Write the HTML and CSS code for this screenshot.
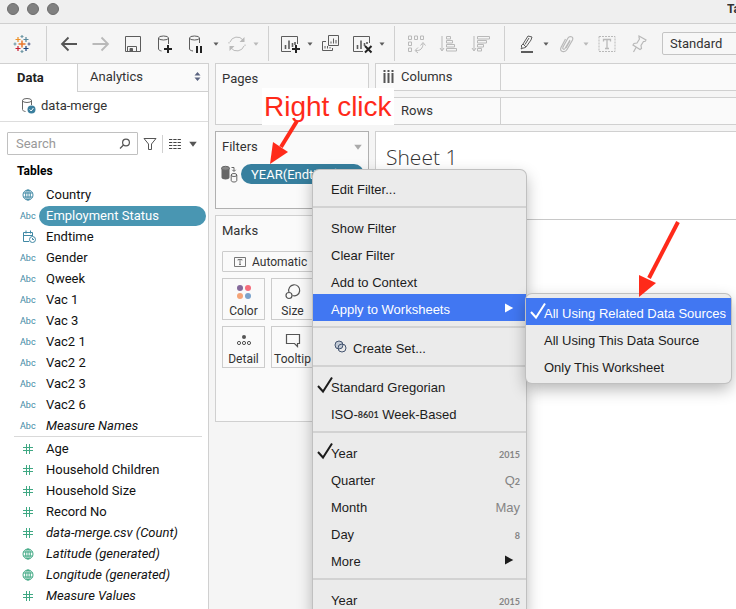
FILE: index.html
```html
<!DOCTYPE html>
<html lang="en">
<head>
<meta charset="utf-8">
<meta name="viewport" content="width=device-width, initial-scale=1">
<title>Tableau</title>
<link rel="stylesheet" href="styles.css">
</head>
<body>
<svg class="defs" aria-hidden="true">
  <symbol id="globe" viewBox="0 0 12 12"><g fill="none" stroke="currentColor"><circle cx="6" cy="6" r="5"/><ellipse cx="6" cy="6" rx="2.3" ry="5"/><path d="M1.5 4h9M1.5 8h9M6 1v10"/></g></symbol>
  <symbol id="hash" viewBox="0 0 12 12"><path d="M4.5 1v10M7.5 1v10M1 4.5h10M1 7.5h10" fill="none" stroke="currentColor"/></symbol>
  <symbol id="caret" viewBox="0 0 8 8"><path d="M1.5 2.5h5L4 5.8z" fill="currentColor"/></symbol>
  <symbol id="check" viewBox="0 0 16 18"><path d="M1 10l5 5.500L15 1.500" fill="none" stroke="currentColor" stroke-width="2"/></symbol>
  <symbol id="play" viewBox="0 0 10 10"><path d="M1 .5v9L9.300 5z" fill="currentColor"/></symbol>
</svg>

<header class="titlebar">
  <span class="light"></span><span class="light"></span><span class="light"></span>
  <span class="window-title">Tableau</span>
</header>

<nav class="toolbar" aria-label="Toolbar">
  <button class="logo" aria-label="Start page"><svg width="20" height="20" viewBox="0 0 20 20" fill="none" stroke-width="1.200">
    <path d="M10 6.500v7M6.500 10h7" stroke="#e8762c" stroke-width="1.500"/>
    <path d="M6 3v5M3.500 5.500h5" stroke="#eb9129"/><path d="M14 3v5M11.500 5.500h5" stroke="#59879b"/>
    <path d="M6 12v5M3.500 14.500h5" stroke="#c72035"/><path d="M14 12v5M11.500 14.500h5" stroke="#1f447e"/>
    <path d="M10 1v3M8.500 2.500h3M10 16v3M8.500 17.500h3M3 8.500v3M1.500 10h3" stroke="#7199a6"/><path d="M17 8.500v3M15.500 10h3" stroke="#5b6591"/></svg></button>
  <div class="group">
    <button aria-label="Back"><svg width="20" height="20" viewBox="0 0 20 20"><path d="M18 10H3M9.500 3.500L3 10l6.500 6.500" fill="none" stroke="#555" stroke-width="1.800"/></svg></button>
    <button class="off" aria-label="Forward"><svg width="20" height="20" viewBox="0 0 20 20"><path d="M1.500 10h15M10.500 3.500L17 10l-6.500 6.500" fill="none" stroke="currentColor" stroke-width="1.800"/></svg></button>
    <button aria-label="Save"><svg width="20" height="20" viewBox="0 0 20 20" fill="none" stroke="currentColor"><path d="M2.500 2.500h15v15h-15zM4.500 17.500v-5h9v5"/><path d="M7 14.500h2.500v2.500H7z" fill="currentColor"/></svg></button>
    <button aria-label="New data source"><svg width="20" height="20" viewBox="0 0 20 20" fill="none" stroke="currentColor"><ellipse cx="8.500" cy="4" rx="5" ry="2"/><path d="M3.500 4v11c0 1 1.500 1.700 3 2M13.500 4v6"/><path d="M13 11v8M9 15h8" stroke="#222" stroke-width="2"/></svg></button>
    <span class="split">
      <button aria-label="Pause updates"><svg width="20" height="20" viewBox="0 0 20 20" fill="none" stroke="currentColor"><ellipse cx="7.500" cy="4" rx="5" ry="2"/><path d="M2.500 4v11c0 1 1.500 1.700 3.500 2M12.500 4v5"/><path d="M10 12v7M14 12v7" stroke="#222" stroke-width="2"/></svg></button>
      <button aria-label="Pause options"><svg width="8" height="8"><use href="#caret"/></svg></button>
    </span>
    <span class="split">
      <button class="off" aria-label="Run update"><svg width="20" height="20" viewBox="0 0 20 20" fill="none" stroke="currentColor"><path d="M3 8a7.500 7.500 0 0 1 13-2M17 12a7.500 7.500 0 0 1-13 2"/><path d="M17.500 3v5h-5zM2.500 17v-5h5z" fill="currentColor" stroke="none"/><path d="M2 9.500V8M18 10.500V12"/></svg></button>
      <button class="off" aria-label="Update options"><svg width="8" height="8"><use href="#caret"/></svg></button>
    </span>
  </div>
  <div class="group">
    <span class="split">
      <button aria-label="New worksheet"><svg width="20" height="20" viewBox="0 0 20 20" fill="none" stroke="currentColor"><path d="M16.500 10V2.500H.500v15H10"/><path d="M4.500 15v-4M8 15V6.500M11.500 13V9M14 11V8" stroke-width="1.600"/><path d="M15 11v8M11 15h8" stroke="#222" stroke-width="2"/></svg></button>
      <button aria-label="New worksheet options"><svg width="8" height="8"><use href="#caret"/></svg></button>
    </span>
    <button aria-label="Duplicate"><svg width="20" height="20" viewBox="0 0 20 20" fill="none" stroke="currentColor"><path d="M7.500 1.500h10v10h-10zM5 7.500H1.500v9h10V14"/><path d="M10 9.500v-2M12.500 9.500v-5M15 9.500V6M4 14.500V12M6.500 14.500V12M9 14.500V13"/></svg></button>
    <span class="split">
      <button aria-label="Clear sheet"><svg width="20" height="20" viewBox="0 0 20 20" fill="none" stroke="currentColor"><path d="M16.500 9V2.500H.500v15H10"/><path d="M4.500 15v-4M8 15V6.500M11.500 12V9M14 10V8" stroke-width="1.600"/><path d="M12 12l6.500 6.500M18.500 12L12 18.500" stroke="#222" stroke-width="2"/></svg></button>
      <button aria-label="Clear options"><svg width="8" height="8"><use href="#caret"/></svg></button>
    </span>
  </div>
  <div class="group">
    <button class="off" aria-label="Swap rows and columns"><svg width="20" height="20" viewBox="0 0 20 20" fill="none" stroke="currentColor"><path d="M1.500 2h3v3.500h-3zM7.500 2h3v3.500h-3zM13.500 2h3v3.500h-3zM1.500 8h3v3.500h-3zM1.500 14h3v3.500h-3z"/><path d="M9 16.500c4 .5 7-2 7-7M11 13.500l-3 3 3 2.500M13.500 11.500l2.500-3 2.500 3"/></svg></button>
    <button class="off" aria-label="Sort ascending"><svg width="20" height="20" viewBox="0 0 20 20" fill="none" stroke="currentColor"><path d="M3 2v14M1 14l2 3 2-3M7.500 2.500h4v2.500h-4zM7.500 6.500h6V9h-6zM7.500 10.500h8V13h-8zM7.500 14.500h10V17h-10z"/></svg></button>
    <button class="off" aria-label="Sort descending"><svg width="20" height="20" viewBox="0 0 20 20" fill="none" stroke="currentColor"><path d="M3 2v14M1 14l2 3 2-3M6.500 2.500h12V5h-12zM6.500 6.500h9V9h-9zM6.500 10.500h6V13h-6zM6.500 14.500h4V17h-4z"/></svg></button>
  </div>
  <div class="group">
    <span class="split">
      <button aria-label="Highlight"><svg width="20" height="20" viewBox="0 0 20 20" fill="none" stroke="currentColor"><path d="M6 10l5-8 4 1-1 3-5 7zM6 10l-2 2 1 1-1 2 2-1h1l2-1M12 4l-4 6.500"/><path d="M4 18h12" stroke-width="2"/></svg></button>
      <button aria-label="Highlight options"><svg width="8" height="8"><use href="#caret"/></svg></button>
    </span>
    <span class="split">
      <button class="off" aria-label="Group members"><svg width="20" height="20" viewBox="0 0 20 20" fill="none" stroke="currentColor" stroke-width="1.200"><path d="M13 6l-5 8.500c-1 1.500-3 .5-2-1.500l5-9c1.500-2.500 6-1.500 4.500 2L10 15.500c-2 3.500-8 2.500-6-2L8.500 5M9 14l4-7"/></svg></button>
      <button class="off" aria-label="Group options"><svg width="8" height="8"><use href="#caret"/></svg></button>
    </span>
    <button class="off" aria-label="Show mark labels"><svg width="20" height="20" viewBox="0 0 20 20" fill="none" stroke="currentColor"><path d="M2 2.500h16v15H2z" stroke-dasharray="2 1"/><path d="M6.500 7.500v-2h7v2M10 5.500v9M8 14.500h4" stroke-width="1.300"/></svg></button>
    <button class="off" aria-label="Fix axes"><svg width="20" height="20" viewBox="0 0 20 20" fill="none" stroke="currentColor" stroke-width="1.200"><path d="M10 2l7 4-1 1.500h-1.500L12 11.500l.5 3-1.500 1-7-4.500 1-1.500 3-.5 2.500-4L10 3.500zM7 13.500L4.500 18"/></svg></button>
  </div>
  <select class="fit" aria-label="Fit"><option>Standard</option></select>
</nav>

<main class="workspace">
  <aside class="data-pane">
    <div class="tabs">
      <button class="tab active">Data</button>
      <button class="tab">Analytics<svg width="7" height="9" viewBox="0 0 7 9"><path d="M3.500 0l3 3.500h-6zM3.500 9l3-3.500h-6z" fill="#5b6480"/></svg></button>
    </div>
    <div class="source">
      <svg width="16" height="18" viewBox="0 0 16 18" fill="none" stroke="#666"><ellipse cx="6" cy="3.500" rx="4.500" ry="2"/><path d="M1.500 3.500v9c0 1 1 1.700 3 2M10.500 3.500V8"/><circle cx="10.500" cy="12.500" r="4" fill="#3b7f9e" stroke="none"/><path d="M8.700 12.500l1.500 1.500 2.200-3" stroke="#fff"/></svg>
      <span>data-merge</span>
    </div>
    <div class="search-row">
      <label class="search">
        <input type="text" placeholder="Search" aria-label="Search">
        <svg width="12" height="12" viewBox="0 0 12 12" fill="none" stroke="#555" stroke-width="1.200"><circle cx="7" cy="4.500" r="3.400"/><path d="M4.500 7L1 10.500"/></svg>
      </label>
      <button aria-label="Filter fields"><svg width="14" height="14" viewBox="0 0 14 14"><path d="M1 1.500h12L8.500 7v5.500h-3V7z" fill="none" stroke="#555"/></svg></button>
      <span class="bar"></span>
      <button aria-label="View options"><svg width="14" height="10" viewBox="0 0 14 10"><path d="M1 .5h12M1 3.500h12M1 6.500h12M1 9.500h12" stroke="#444" stroke-dasharray="3.300 1"/></svg></button>
      <button class="view-more" aria-label="More options"><svg width="12" height="12" viewBox="0 0 8 8"><use href="#caret"/></svg></button>
    </div>
    <h2>Tables</h2>
    <ul class="fields">
      <li><svg class="ico" width="12" height="12"><use href="#globe"/></svg><span>Country</span></li>
      <li class="selected"><i>Abc</i><span>Employment Status</span></li>
      <li><svg class="ico" width="15" height="14" viewBox="0 0 15 14" fill="none" stroke="currentColor"><path d="M7 11.500H1.500v-9h9V6M1.500 5.500h9M4 .5v3M8.500 .5v3"/><circle cx="10.500" cy="9.500" r="3"/><path d="M10.500 8v1.500H12"/></svg><span>Endtime</span></li>
      <li><i>Abc</i><span>Gender</span></li>
      <li><i>Abc</i><span>Qweek</span></li>
      <li><i>Abc</i><span>Vac 1</span></li>
      <li><i>Abc</i><span>Vac 3</span></li>
      <li><i>Abc</i><span>Vac2 1</span></li>
      <li><i>Abc</i><span>Vac2 2</span></li>
      <li><i>Abc</i><span>Vac2 3</span></li>
      <li><i>Abc</i><span>Vac2 6</span></li>
      <li class="generated"><i>Abc</i><span>Measure Names</span></li>
    </ul>
    <ul class="fields measures">
      <li><svg class="ico" width="12" height="12"><use href="#hash"/></svg><span>Age</span></li>
      <li><svg class="ico" width="12" height="12"><use href="#hash"/></svg><span>Household Children</span></li>
      <li><svg class="ico" width="12" height="12"><use href="#hash"/></svg><span>Household Size</span></li>
      <li><svg class="ico" width="12" height="12"><use href="#hash"/></svg><span>Record No</span></li>
      <li class="generated"><svg class="ico" width="12" height="12"><use href="#hash"/></svg><span>data-merge.csv (Count)</span></li>
      <li class="generated"><svg class="ico" width="12" height="12"><use href="#globe"/></svg><span>Latitude (generated)</span></li>
      <li class="generated"><svg class="ico" width="12" height="12"><use href="#globe"/></svg><span>Longitude (generated)</span></li>
      <li class="generated"><svg class="ico" width="12" height="12"><use href="#hash"/></svg><span>Measure Values</span></li>
    </ul>
  </aside>

  <section class="cards">
    <div class="card pages"><h3>Pages</h3></div>
    <div class="card filters">
      <h3>Filters<svg width="12" height="12" viewBox="0 0 8 8"><use href="#caret"/></svg></h3>
      <div class="filter-row">
        <svg width="17" height="18" viewBox="0 0 17 18"><path d="M.5 3.500v9c0 2.500 8 2.500 8 0v-9z" fill="#666"/><ellipse cx="4.500" cy="3.300" rx="4" ry="2" fill="#888" stroke="#666"/><path d="M10 9h7v9h-7z" fill="#fafafa"/><g fill="none" stroke="#666"><ellipse cx="13" cy="10" rx="2.800" ry="1.500"/><path d="M10.200 10v5.500c0 2 5.600 2 5.600 0V10M10.500 2.500h2.500V6M11.300 4.800L13 6.500l1.700-1.700"/></g></svg>
        <button class="pill">YEAR(Endtime)</button>
      </div>
    </div>
    <div class="card marks">
      <h3>Marks</h3>
      <div class="mark-type">
        <svg width="12" height="12" viewBox="0 0 12 12" fill="none" stroke="#777"><path d="M.5 1.500h11v9H.500zM4 4.500v-1h4v1M6 3.500v5M5 8.500h2"/></svg>
        <select aria-label="Mark type"><option>Automatic</option></select>
      </div>
      <div class="mark-grid">
        <button><svg width="18" height="18" viewBox="0 0 18 18"><circle cx="5" cy="5" r="3" fill="#84699a"/><circle cx="13" cy="5" r="3" fill="#f56d7c"/><circle cx="5" cy="13" r="3" fill="#f5a477"/><circle cx="13" cy="13" r="3" fill="#7ba3cb"/></svg>Color</button>
        <button><svg width="18" height="18" viewBox="0 0 18 18" fill="none" stroke="#555" stroke-width="1.200"><path d="M5 9A5.500 5.500 0 1 1 8.500 12.500"/><circle cx="5" cy="12.500" r="3"/></svg>Size</button>
        <button><svg width="18" height="18" viewBox="0 0 18 18" fill="none" stroke="#555"><circle cx="9" cy="6" r="2" fill="#555" stroke="none"/><circle cx="4" cy="12" r="1.600"/><circle cx="9" cy="12" r="1.600"/><circle cx="14" cy="12" r="1.600"/></svg>Detail</button>
        <button><svg width="18" height="18" viewBox="0 0 18 18" fill="none" stroke="#555" stroke-width="1.200"><path d="M2.500 3.500h13v9h-2v3l-3-3h-8z"/></svg>Tooltip</button>
      </div>
    </div>
  </section>

  <section class="canvas">
    <div class="shelf"><div class="shelf-name"><svg width="11" height="13" viewBox="0 0 11 13"><path d="M1.500 0v2M5.500 0v2M9.500 0v2M1.500 3v10M5.500 3v10M9.500 3v10" stroke="#555" stroke-width="2"/></svg>Columns</div></div>
    <div class="shelf"><div class="shelf-name"><svg width="11" height="13" viewBox="0 0 11 13"><path d="M0 2.500h2M0 6.500h2M0 10.500h2M3 2.500h8M3 6.500h8M3 10.500h8" stroke="#555" stroke-width="2"/></svg>Rows</div></div>
    <div class="sheet"><h1>Sheet 1</h1></div>
  </section>
</main>

<div class="menu context">
  <button>Edit Filter...</button>
  <hr>
  <button>Show Filter</button>
  <button>Clear Filter</button>
  <button>Add to Context</button>
  <button class="hot">Apply to Worksheets<svg class="more" width="10" height="10"><use href="#play"/></svg></button>
  <hr>
  <button class="with-icon"><svg width="13" height="13" viewBox="0 0 13 13" fill="none" stroke="#44546f"><circle cx="5" cy="5" r="4" fill="#c3cbd6"/><circle cx="8" cy="8" r="4"/></svg>Create Set...</button>
  <hr>
  <button><svg class="tick" width="16" height="18"><use href="#check"/></svg>Standard Gregorian</button>
  <button>ISO-<small class="dark">8601</small> Week-Based</button>
  <hr>
  <button><svg class="tick" width="16" height="18"><use href="#check"/></svg>Year<span class="hint"><small>2015</small></span></button>
  <button>Quarter<span class="hint">Q<small>2</small></span></button>
  <button>Month<span class="hint">May</span></button>
  <button>Day<span class="hint"><small>8</small></span></button>
  <button>More<svg class="more" width="10" height="10"><use href="#play"/></svg></button>
  <hr>
  <button>Year<span class="hint"><small>2015</small></span></button>
</div>

<div class="menu submenu">
  <button class="hot"><svg class="tick" width="16" height="18"><use href="#check"/></svg>All Using Related Data Sources</button>
  <button>All Using This Data Source</button>
  <button>Only This Worksheet</button>
</div>

<div class="note">Right click</div>
<svg class="arrow first" width="30" height="46" viewBox="0 0 30 46"><path d="M28 2L12 28" stroke="#ff2a1a" stroke-width="4"/><path d="M1 45L4 23l15 10z" fill="#ff2a1a"/></svg>
<svg class="arrow second" width="44" height="78" viewBox="0 0 44 78"><path d="M40 2L11 58" stroke="#ff2a1a" stroke-width="4"/><path d="M1 77V55l17 8z" fill="#ff2a1a"/></svg>
</body>
</html>
```
FILE: styles.css
```css
* { box-sizing: border-box; }
body {
  margin: 0;
  height: 100vh;
  overflow: hidden;
  display: flex;
  flex-direction: column;
  position: relative;
  background: #f5f5f5;
  color: #333;
  font-family: Roboto, "Liberation Sans", sans-serif;
  font-size: 12px;
}
button, select, input { font: inherit; color: inherit; }
button { padding: 0; border: 0; background: none; }
svg { display: block; flex: none; }
ul { list-style: none; margin: 0; padding: 0; }
h1, h2, h3 { margin: 0; }
.defs { position: absolute; width: 0; height: 0; }

.titlebar {
  flex: none;
  height: 24px;
  display: flex;
  gap: 8px;
  padding: 3px 0 0 7px;
  background: #efefef;
  border-bottom: 1px solid #cfcfcf;
  overflow: hidden;
}
.light { width: 12px; height: 12px; border-radius: 50%; background: #808080; border: 1px solid #6c6c6c; }
.window-title {
  margin: -2px 0 0 auto;
  width: 9px;
  overflow: hidden;
  white-space: nowrap;
  font-weight: 700;
  line-height: 16px;
}

.toolbar {
  flex: none;
  height: 39px;
  display: flex;
  align-items: center;
  overflow: hidden;
  color: #5c5c5c;
}
.logo { padding: 0 14px 0 12px; }
.group {
  flex: none;
  display: flex;
  align-items: center;
  gap: 12px;
  height: 35px;
  padding: 0 13px 0 12px;
  border-left: 1px solid #d0d0d0;
}
.split { display: flex; align-items: center; gap: 5px; margin-right: -5px; }
.off { color: #b9b9b9; }
.fit {
  flex: 1 0 120px;
  height: 23px;
  padding: 0 7px;
  border: 1px solid #c4c4c4;
  border-radius: 2px;
  background: #f7f7f7;
  color: #333;
  appearance: none;
  font-size: 13px;
}

.workspace { flex: 1; min-height: 0; display: flex; gap: 6px; }

.data-pane {
  flex: none;
  width: 209px;
  background: #fff;
  border: solid #d0d0d0;
  border-width: 1px 1px 0 0;
  overflow: hidden;
}
.tabs { display: flex; height: 28px; }
.tab {
  flex: 1;
  display: flex;
  justify-content: space-between;
  align-items: center;
  padding: 0 7px 2px 12px;
  background: #fafafa;
  border: solid #d0d0d0;
  border-width: 0 0 1px 1px;
  font-size: 13px;
}
.tab.active {
  flex: 0 0 77px;
  padding: 0 0 2px 17px;
  background: #fff;
  border: 0;
  font-weight: 700;
  font-size: 13px;
  color: #222;
}
.source {
  display: flex;
  align-items: center;
  gap: 4px;
  height: 30px;
  padding: 0 0 2px 21px;
  border-bottom: 1px solid #ddd;
  font-size: 13px;
}
.search-row { display: flex; align-items: center; gap: 5px; padding: 10px 8px 0 7px; }
.search {
  width: 131px;
  height: 23px;
  display: flex;
  align-items: center;
  padding: 0 6px 0 8px;
  border: 1px solid #c0c0c0;
  border-radius: 1px;
}
.search input { flex: 1; min-width: 0; padding: 0; border: 0; outline: 0; font-size: 13px; }
.search input::placeholder { color: #999; }
.bar { width: 1px; height: 18px; background: #d0d0d0; }
.view-more { color: #555; }
.data-pane h2 { padding-left: 17px; margin: 6px 0 3px; font-size: 12px; line-height: 20px; color: #000; }

.fields li {
  display: grid;
  grid-template-columns: 19px 1fr;
  align-items: center;
  height: 21px;
  padding: 0 2px 0 20px;
  color: #4189a5;
}
.fields span {
  height: 20px;
  padding-left: 7px;
  border-radius: 10px;
  font-size: 13px;
  line-height: 20px;
  color: #111;
}
.fields i { font-style: normal; font-size: 9px; line-height: 20px; }
.ico { margin-left: 2px; }
.selected span { background: #4996b2; color: #fff; }
.generated span { font-style: italic; }
.measures { border-top: 1px solid #d9d9d9; margin: 0 6px 0 14px; padding-top: 1px; }
.measures li { padding: 0 0 0 6px; color: #3fa883; }

.cards { flex: none; width: 154px; display: flex; flex-direction: column; gap: 6px; }
.card { background: #fafafa; border: 1px solid #d0d0d0; padding: 6px; }
.card h3 {
  display: flex;
  justify-content: space-between;
  align-items: center;
  font-size: 13px;
  font-weight: 400;
  line-height: 18px;
}
.card h3 svg { color: #aaa; margin-right: -2px; }
.pages { height: 62px; }
.filters { height: 78px; border-color: #b0b0b0; }
.filter-row { display: flex; align-items: center; gap: 3px; margin-top: 8px; }
.filter-row svg { margin-left: -1px; }
.pill {
  flex: 1;
  height: 20px;
  margin-right: -2px;
  padding-left: 10px;
  border-radius: 10px;
  background: #377f9e;
  color: #fff;
  text-align: left;
  font-size: 13px;
}
.marks { height: 207px; }
.mark-type { position: relative; margin: 11px 0 6px; }
.mark-type svg { position: absolute; left: 12px; top: 5px; }
.mark-type select {
  display: block;
  width: 100%;
  height: 21px;
  padding: 0 0 0 29px;
  border: 1px solid #ccc;
  border-radius: 1px;
  background: #fafafa;
  appearance: none;
}
.mark-grid { display: grid; grid-template-columns: repeat(2, 43px); gap: 6px; }
.mark-grid button {
  display: flex;
  flex-direction: column;
  align-items: center;
  gap: 3px;
  height: 42px;
  padding-top: 4px;
  border: 1px solid #ccc;
  line-height: 14px;
}

.canvas { flex: 1; min-width: 0; display: flex; flex-direction: column; gap: 6px; }
.shelf { height: 28px; background: #fafafa; border: 1px solid #d0d0d0; border-right: 0; }
.shelf-name {
  display: flex;
  align-items: center;
  gap: 7px;
  width: 125px;
  height: 100%;
  padding: 0 0 2px 7px;
  border-right: 1px solid #d0d0d0;
  font-size: 13px;
}
.sheet { flex: 1; background: #fff; border: solid #d0d0d0; border-width: 1px 0 0 1px; }
.sheet h1 {
  height: 88px;
  padding: 11px 10px 0;
  border-bottom: 1px solid #c8c8c8;
  font: 300 21px/28px "Open Sans", "Noto Sans", sans-serif;
}

.menu {
  position: absolute;
  padding: 4px 0;
  background: #ebebeb;
  border-radius: 6px;
  box-shadow: 0 0 0 1px #c0c0c0, 0 6px 16px rgba(0, 0, 0, .3);
  font-family: "Liberation Sans", Arial, sans-serif;
  font-size: 13px;
  color: #1c1c1c;
}
.context { left: 313px; top: 170px; width: 213px; }
.submenu { left: 526px; top: 294px; width: 205px; }
.menu button {
  position: relative;
  display: flex;
  align-items: center;
  width: 100%;
  height: 27px;
  padding: 3px 6px 0 18px;
  white-space: pre;
}
.menu hr { height: 2px; margin: 5px 0; border: 0; background: #d2d2d2; }
.menu .hot { background: #4177f2; color: #fff; }
.menu .with-icon { gap: 6px; padding-left: 21px; }
.with-icon svg { margin-top: -4px; }
.tick { position: absolute; left: 4px; top: 4px; }
.more { margin: -2px 6px 0 auto; }
.hint { margin-left: auto; color: #858585; }
.menu small { font: 700 9px Lato, sans-serif; color: #858585; }
.menu .dark { color: #333; }

.note {
  position: absolute;
  left: 262px;
  top: 88px;
  padding: 0 2px;
  background: #fff;
  color: #ff2a1a;
  font: 28px/37px "Liberation Sans", Arial, sans-serif;
}
.arrow { position: absolute; }
.first { left: 269px; top: 119px; }
.second { left: 638px; top: 220px; }
```
